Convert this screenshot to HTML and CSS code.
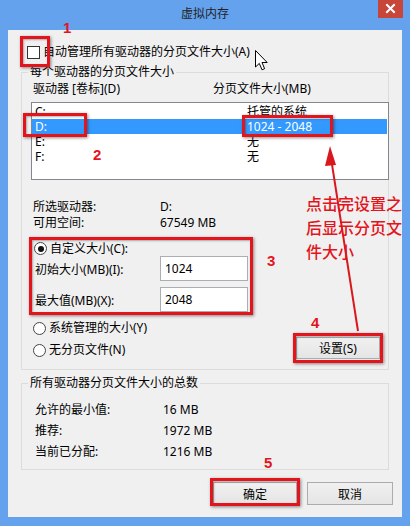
FILE: index.html
```html
<!DOCTYPE html>
<html lang="zh-CN">
<head>
<meta charset="utf-8">
<title>虚拟内存</title>
<link rel="stylesheet" href="styles.css">
</head>
<body>
<div class="window">
  <div class="titlebar">
    <span class="title">虚拟内存</span>
    <div class="close">
      <svg width="25" height="18" viewBox="0 0 25 18"><path d="M9 5 L16 12 M16 5 L9 12" stroke="#fff" stroke-width="2" stroke-linecap="square"/></svg>
    </div>
  </div>
  <div class="client">
    <div class="check-row"><span class="checkbox"></span><span>自动管理所有驱动器的分页文件大小(A)</span></div>

    <div class="group group-drives">
      <div class="legend">每个驱动器的分页文件大小</div>
      <div class="col-heads"><span class="h1">驱动器 [卷标](D)</span><span>分页文件大小(MB)</span></div>
      <div class="listbox">
        <div class="row"><span class="c1">C:</span><span>托管的系统</span></div>
        <div class="row selected"><span class="c1">D:</span><span>1024 - 2048</span></div>
        <div class="row"><span class="c1">E:</span><span>无</span></div>
        <div class="row"><span class="c1">F:</span><span>无</span></div>
      </div>
      <div class="info">
        <span>所选驱动器:</span><span>D:</span>
        <span>可用空间:</span><span>67549 MB</span>
      </div>
      <div class="radio-row custom"><span class="radio on"></span><span>自定义大小(C):</span></div>
      <div class="fields">
        <span>初始大小(MB)(I):</span><span class="field">1024</span>
        <span>最大值(MB)(X):</span><span class="field">2048</span>
      </div>
      <div class="bottom-row">
        <div class="radios">
          <div class="radio-row"><span class="radio"></span><span>系统管理的大小(Y)</span></div>
          <div class="radio-row"><span class="radio"></span><span>无分页文件(N)</span></div>
        </div>
        <div class="btn btn-set">设置(S)</div>
      </div>
    </div>

    <div class="group group-total">
      <div class="legend">所有驱动器分页文件大小的总数</div>
      <div class="totals">
        <span>允许的最小值:</span><span>16 MB</span>
        <span>推荐:</span><span>1972 MB</span>
        <span>当前已分配:</span><span>1216 MB</span>
      </div>
    </div>

    <div class="buttons">
      <div class="btn btn-ok">确定</div>
      <div class="btn btn-cancel">取消</div>
    </div>
  </div>

  <svg class="overlay" width="410" height="526" viewBox="0 0 410 526">
    <line x1="358" y1="331" x2="331" y2="158" stroke="#d9181e" stroke-width="2"/>
    <polygon points="330,146 325,166 336,165" fill="#d9181e"/>
    <path class="cursor" d="M255.5 50.5 L255.5 67 L259.3 63.4 L262 69.8 L264.6 68.7 L262 62.5 L267.2 62.5 Z" fill="#fff" stroke="#000" stroke-width="1"/>
  </svg>

  <div class="mark box1"></div>
  <div class="mark box2"></div>
  <div class="mark box2b"></div>
  <div class="mark box3"></div>
  <div class="mark box4"></div>
  <div class="mark box5"></div>

  <span class="num n1">1</span>
  <span class="num n2">2</span>
  <span class="num n3">3</span>
  <span class="num n4">4</span>
  <span class="num n5">5</span>

  <div class="note">点击完设置之<br>后显示分页文<br>件大小</div>
</div>
</body>
</html>
```

FILE: styles.css
```css
* { box-sizing: border-box; }

body {
  margin: 0;
  width: 410px;
  height: 526px;
  overflow: hidden;
  background: #64a2ee;
  font-family: "Noto Sans", "Noto Sans CJK SC", sans-serif;
  font-size: 12px;
  color: #000;
}

.window {
  position: relative;
  height: 526px;
  display: flex;
  flex-direction: column;
}

.titlebar {
  position: relative;
  height: 30px;
  line-height: 28px;
  text-align: center;
  color: #222;
}

.close {
  position: absolute;
  top: 0;
  right: 7px;
  width: 25px;
  height: 18px;
  background: #c8453a;
}
.close svg { display: block; }

.client {
  flex: 1;
  margin: 0 8px 9px;
  background: #f0f0f0;
  padding: 14px 13px 0;
  display: flex;
  flex-direction: column;
}

.check-row {
  display: flex;
  align-items: center;
  gap: 3px;
  height: 16px;
  line-height: 16px;
  padding-left: 6px;
}
.checkbox {
  width: 13px;
  height: 13px;
  border: 1px solid #333;
  background: #fff;
}

.group {
  display: flex;
  flex-direction: column;
  border: 1px solid #dcdcdc;
  padding: 0 0 0 9px;
}
.legend {
  align-self: flex-start;
  height: 16px;
  line-height: 16px;
  margin: -9px 0 0 -3px;
  padding: 0 2px;
  background: #f0f0f0;
}

.group-drives {
  margin-top: 12px;
  padding-bottom: 11px;
}

.col-heads {
  display: flex;
  height: 16px;
  line-height: 16px;
  margin-top: 1px;
  margin-bottom: 5px;
  padding-left: 2px;
}
.col-heads .h1 { width: 180px; }

.listbox {
  height: 78px;
  margin-right: -1px;
  border: 1px solid #828790;
  background: #fff;
  padding: 1px 0 0;
}
.row {
  display: flex;
  height: 15px;
  line-height: 15px;
  padding-left: 3px;
  margin-right: 1px;
}
.row .c1 { width: 212px; }
.row.selected {
  background: #3399ff;
  color: #fff;
}

.info {
  display: grid;
  grid-template-columns: 127px auto;
  grid-auto-rows: 16px;
  line-height: 16px;
  margin-top: 19px;
  padding-left: 2px;
}

.radio-row {
  display: flex;
  align-items: center;
  gap: 3px;
  height: 16px;
  line-height: 16px;
  padding-left: 2px;
}
.radio-row.custom {
  margin-top: 10px;
  height: 15px;
  padding-left: 3px;
}
.radio {
  position: relative;
  width: 13px;
  height: 13px;
  border: 1px solid #444;
  border-radius: 50%;
  background: #fff;
}
.radio.on::after {
  content: "";
  position: absolute;
  left: 2.5px;
  top: 2.5px;
  width: 6px;
  height: 6px;
  border-radius: 50%;
  background: #111;
}

.fields {
  display: grid;
  grid-template-columns: 125px 88px;
  grid-auto-rows: 25px;
  row-gap: 6px;
  align-items: center;
  padding-left: 4px;
}
.field {
  height: 25px;
  line-height: 23px;
  border: 1px solid #abadb3;
  background: #fff;
  padding-left: 4px;
}

.bottom-row {
  display: flex;
  align-items: flex-end;
  justify-content: space-between;
  margin-top: 8px;
}
.radios {
  display: flex;
  flex-direction: column;
  gap: 6px;
}

.btn {
  display: flex;
  align-items: center;
  justify-content: center;
  height: 23px;
  border: 1px solid #acacac;
  background: linear-gradient(#f0f0f0, #e5e5e5);
}
.btn-set {
  width: 84px;
  height: 22px;
  margin-right: 8px;
  margin-bottom: -1px;
}

.group-total {
  margin-top: 13px;
  padding-bottom: 9px;
}
.totals {
  display: grid;
  grid-template-columns: 128px auto;
  grid-auto-rows: 16px;
  row-gap: 5px;
  line-height: 16px;
  margin-top: 11px;
  padding-left: 4px;
}

.buttons {
  display: flex;
  justify-content: flex-end;
  gap: 10px;
  margin-top: 12px;
  margin-right: -4px;
}
.btn-ok { width: 84px; }
.btn-cancel { width: 86px; }

/* annotations drawn over the screenshot */
.overlay {
  position: absolute;
  left: 0;
  top: 0;
  pointer-events: none;
}

.mark {
  position: absolute;
  border: 3px solid #e3141c;
  box-shadow: 1px 1px 3px rgba(0, 0, 0, 0.45), inset 1px 1px 2px rgba(0, 0, 0, 0.3);
}
.box1 { left: 20px; top: 36px; width: 30px; height: 31px; }
.box2 { left: 23px; top: 113px; width: 64px; height: 24px; }
.box2b { left: 242px; top: 115px; width: 91px; height: 22px; }
.box3 { left: 29px; top: 237px; width: 224px; height: 78px; }
.box4 { left: 293px; top: 333px; width: 90px; height: 30px; }
.box5 { left: 210px; top: 478px; width: 90px; height: 28px; }

.num {
  position: absolute;
  font-family: "Liberation Sans", sans-serif;
  font-weight: bold;
  font-size: 15px;
  line-height: 16px;
  color: #e3141c;
}
.n1 { left: 63px; top: 20px; }
.n2 { left: 93px; top: 147px; }
.n3 { left: 267px; top: 253px; }
.n4 { left: 311px; top: 315px; }
.n5 { left: 264px; top: 455px; }

.note {
  position: absolute;
  left: 306px;
  top: 191px;
  font-family: "Noto Sans CJK SC", sans-serif;
  font-size: 16px;
  font-weight: 500;
  line-height: 24px;
  color: #e3141c;
  white-space: nowrap;
}
```
